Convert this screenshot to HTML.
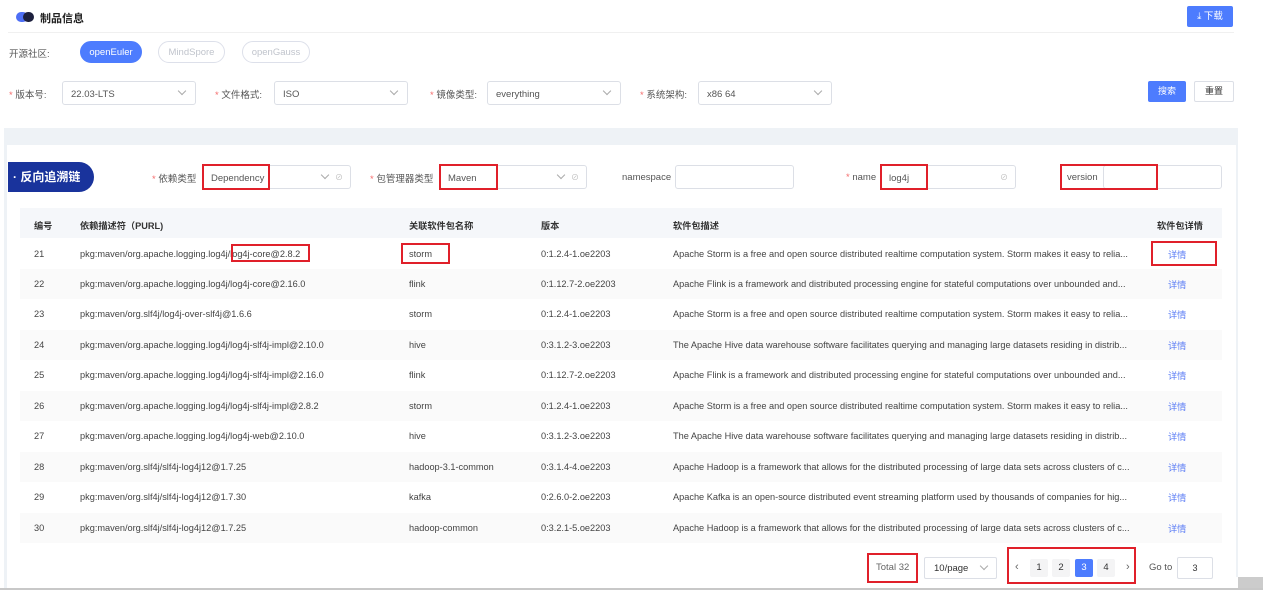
<!DOCTYPE html><html><head><meta charset="utf-8"><style>
*{box-sizing:border-box;margin:0;padding:0}
body{width:1263px;height:590px;overflow:hidden;background:#fff;font-family:"Liberation Sans","Noto Sans CJK SC",sans-serif;font-size:9px;color:#333;position:relative}
.a{position:absolute}
.inp{position:absolute;border:1px solid #dcdfe6;border-radius:3px;background:#fff;height:24px;font-size:9.5px;color:#555;padding:6px 8px}
.chev{position:absolute;width:6px;height:6px;border-right:1px solid #aaa;border-bottom:1px solid #aaa;transform:rotate(45deg)}
.red{position:absolute;border:2px solid #e0202a}
.lbl{position:absolute;font-size:9.5px;color:#555}
.lbl b{color:#f56c6c;font-weight:normal}
.row{position:absolute;left:20px;width:1202px;height:30.4px;font-size:9.2px;color:#444}
.row span{position:absolute;top:10px;white-space:nowrap}
.pill{position:absolute;height:22px;border-radius:11px;border:1px solid #dde0ea;color:#c0c4cc;font-size:9.5px;display:flex;align-items:center;justify-content:center}
.pg{position:absolute;top:559px;width:18px;height:18px;background:#f4f4f5;border-radius:2px;text-align:center;line-height:18px;font-size:9.5px;color:#333}
</style></head><body>
<div class="a" style="left:16px;top:12px;width:12px;height:10px;border-radius:5px;background:#4d6ef5"></div>
<div class="a" style="left:23px;top:12px;width:11px;height:10px;border-radius:5px;background:#1c1f3d"></div>
<div class="a" style="left:40px;top:10px;font-size:11px;font-weight:bold;color:#222">制品信息</div>
<div class="a" style="left:1187px;top:6px;width:46px;height:21px;background:#4d7cfe;border-radius:2px;color:#fff;font-size:9.5px;line-height:21px;text-align:center">⤓ 下载</div>
<div class="a" style="left:8px;top:32px;width:1226px;height:1px;background:#f0f0f0"></div>
<div class="lbl" style="left:9px;top:46px">开源社区:</div>
<div class="pill" style="left:80px;top:41px;width:62px;background:#4d7cfe;border-color:#4d7cfe;color:#fff">openEuler</div>
<div class="pill" style="left:158px;top:41px;width:67px">MindSpore</div>
<div class="pill" style="left:242px;top:41px;width:68px">openGauss</div>
<div class="lbl" style="left:9px;top:87px"><b>*</b> 版本号:</div>
<div class="inp" style="left:62px;top:81px;width:134px;padding-top:7px">22.03-LTS<div class="chev" style="right:10px;top:6px"></div></div>
<div class="lbl" style="left:215px;top:87px"><b>*</b> 文件格式:</div>
<div class="inp" style="left:274px;top:81px;width:134px;padding-top:7px">ISO<div class="chev" style="right:10px;top:6px"></div></div>
<div class="lbl" style="left:430px;top:87px"><b>*</b> 镜像类型:</div>
<div class="inp" style="left:487px;top:81px;width:134px;padding-top:7px">everything<div class="chev" style="right:10px;top:6px"></div></div>
<div class="lbl" style="left:640px;top:87px"><b>*</b> 系统架构:</div>
<div class="inp" style="left:698px;top:81px;width:134px;padding-top:7px">x86 64<div class="chev" style="right:10px;top:6px"></div></div>
<div class="a" style="left:1148px;top:81px;width:38px;height:21px;background:#4d7cfe;border-radius:2px;color:#fff;text-align:center;line-height:21px">搜索</div>
<div class="a" style="left:1194px;top:81px;width:40px;height:21px;border:1px solid #dcdfe6;border-radius:2px;text-align:center;line-height:19px;color:#333">重置</div>
<div class="a" style="left:4px;top:128px;width:1234px;height:17px;background:#eef2f6"></div>
<div class="a" style="left:4px;top:145px;width:3px;height:443px;background:#eef2f6"></div>
<div class="a" style="left:1236px;top:145px;width:2px;height:432px;background:#eef2f6"></div>
<div class="a" style="left:1238px;top:577px;width:25px;height:11px;background:#ccc"></div>
<div class="a" style="left:0;top:588px;width:1263px;height:2px;background:#c8c8c8"></div>
<div class="a" style="left:8px;top:162px;width:86px;height:30px;background:#19339c;border-radius:0 15px 15px 0;color:#fff;font-size:12px;font-weight:bold;line-height:30px;padding-left:5px">· 反向追溯链</div>
<div class="lbl" style="left:152px;top:171px"><b>*</b> 依赖类型</div>
<div class="inp" style="left:202px;top:165px;width:149px;padding-top:7px">Dependency<div class="chev" style="right:22px;top:6px"></div><span class="a" style="right:7px;top:6px;color:#bbb;font-size:8px">⊘</span></div>
<div class="red" style="left:202px;top:164px;width:68px;height:26px"></div>
<div class="lbl" style="left:370px;top:171px"><b>*</b> 包管理器类型</div>
<div class="inp" style="left:439px;top:165px;width:148px;padding-top:7px">Maven<div class="chev" style="right:22px;top:6px"></div><span class="a" style="right:7px;top:6px;color:#bbb;font-size:8px">⊘</span></div>
<div class="red" style="left:439px;top:164px;width:59px;height:26px"></div>
<div class="lbl" style="left:622px;top:172px">namespace</div>
<div class="inp" style="left:675px;top:165px;width:119px"></div>
<div class="lbl" style="left:846px;top:172px"><b>*</b> name</div>
<div class="inp" style="left:880px;top:165px;width:136px;padding-top:7px">log4j<span class="a" style="right:7px;top:6px;color:#bbb;font-size:8px">⊘</span></div>
<div class="red" style="left:880px;top:164px;width:48px;height:26px"></div>
<div class="inp" style="left:1103px;top:165px;width:119px"></div>
<div class="lbl" style="left:1067px;top:172px">version</div>
<div class="red" style="left:1060px;top:164px;width:98px;height:26px"></div>
<div class="row" style="top:208px;background:#f5f7fa;font-weight:bold;color:#333"><span style="left:14px">编号</span><span style="left:60px">依赖描述符（PURL)</span><span style="left:389px">关联软件包名称</span><span style="left:521px">版本</span><span style="left:653px">软件包描述</span><span style="left:1137px">软件包详情</span></div>
<div id="rows"></div>
<div class="red" style="left:231px;top:244px;width:79px;height:18px"></div>
<div class="red" style="left:401px;top:243px;width:49px;height:21px"></div>
<div class="red" style="left:1151px;top:241px;width:66px;height:25px"></div>
<div class="a" style="left:876px;top:562px;color:#666;font-size:9.5px">Total 32</div>
<div class="red" style="left:867px;top:553px;width:51px;height:30px"></div>
<div class="a" style="left:924px;top:557px;width:73px;height:22px;border:1px solid #dcdfe6;border-radius:2px;padding:5px 9px;color:#333;font-size:9.5px">10/page<div class="chev" style="right:9px;top:5px"></div></div>
<div class="a" style="left:1015px;top:561px;color:#666;font-size:11px">‹</div>
<div class="pg" style="left:1030px">1</div><div class="pg" style="left:1052px">2</div><div class="pg" style="left:1075px;background:#4d7cfe;color:#fff">3</div><div class="pg" style="left:1097px">4</div>
<div class="a" style="left:1126px;top:561px;color:#666;font-size:11px">›</div>
<div class="red" style="left:1007px;top:547px;width:129px;height:37px"></div>
<div class="a" style="left:1149px;top:562px;color:#555;font-size:9.5px">Go to</div>
<div class="a" style="left:1177px;top:557px;width:36px;height:22px;border:1px solid #dcdfe6;border-radius:2px;text-align:center;line-height:20px">3</div>
<script>
var d=[["21","pkg:maven/org.apache.logging.log4j/log4j-core@2.8.2","storm","0:1.2.4-1.oe2203","Apache Storm is a free and open source distributed realtime computation system. Storm makes it easy to relia..."],
["22","pkg:maven/org.apache.logging.log4j/log4j-core@2.16.0","flink","0:1.12.7-2.oe2203","Apache Flink is a framework and distributed processing engine for stateful computations over unbounded and..."],
["23","pkg:maven/org.slf4j/log4j-over-slf4j@1.6.6","storm","0:1.2.4-1.oe2203","Apache Storm is a free and open source distributed realtime computation system. Storm makes it easy to relia..."],
["24","pkg:maven/org.apache.logging.log4j/log4j-slf4j-impl@2.10.0","hive","0:3.1.2-3.oe2203","The Apache Hive data warehouse software facilitates querying and managing large datasets residing in distrib..."],
["25","pkg:maven/org.apache.logging.log4j/log4j-slf4j-impl@2.16.0","flink","0:1.12.7-2.oe2203","Apache Flink is a framework and distributed processing engine for stateful computations over unbounded and..."],
["26","pkg:maven/org.apache.logging.log4j/log4j-slf4j-impl@2.8.2","storm","0:1.2.4-1.oe2203","Apache Storm is a free and open source distributed realtime computation system. Storm makes it easy to relia..."],
["27","pkg:maven/org.apache.logging.log4j/log4j-web@2.10.0","hive","0:3.1.2-3.oe2203","The Apache Hive data warehouse software facilitates querying and managing large datasets residing in distrib..."],
["28","pkg:maven/org.slf4j/slf4j-log4j12@1.7.25","hadoop-3.1-common","0:3.1.4-4.oe2203","Apache Hadoop is a framework that allows for the distributed processing of large data sets across clusters of c..."],
["29","pkg:maven/org.slf4j/slf4j-log4j12@1.7.30","kafka","0:2.6.0-2.oe2203","Apache Kafka is an open-source distributed event streaming platform used by thousands of companies for hig..."],
["30","pkg:maven/org.slf4j/slf4j-log4j12@1.7.25","hadoop-common","0:3.2.1-5.oe2203","Apache Hadoop is a framework that allows for the distributed processing of large data sets across clusters of c..."]];
var h="";d.forEach(function(r,i){h+='<div class="row" style="top:'+(238.5+i*30.45)+'px;background:'+(i%2?'#fafafa':'#fff')+'"><span style="left:14px">'+r[0]+'</span><span style="left:60px">'+r[1]+'</span><span style="left:389px">'+r[2]+'</span><span style="left:521px">'+r[3]+'</span><span style="left:653px">'+r[4]+'</span><span style="left:1148px;top:8px;color:#5b7cf5">详情</span></div>';});
document.getElementById("rows").innerHTML=h;
</script>
</body></html>
